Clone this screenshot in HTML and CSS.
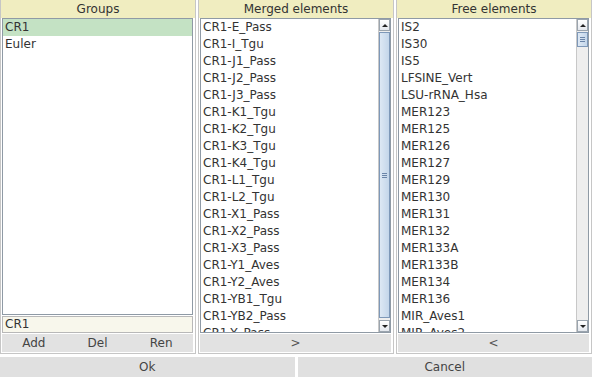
FILE: index.html
```html
<!DOCTYPE html>
<html>
<head>
<meta charset="utf-8">
<link rel="stylesheet" href="styles.css">
</head>
<body>
<div class="app">
  <div class="panels">
    <div class="panel">
      <div class="header">Groups</div>
      <div class="content">
        <div class="list">
          <div class="row selected">CR1</div>
          <div class="row">Euler</div>
        </div>
        <div class="field">CR1</div>
        <div class="buttons">
          <div class="btn">Add</div>
          <div class="btn">Del</div>
          <div class="btn">Ren</div>
        </div>
      </div>
    </div>
    <div class="panel">
      <div class="header">Merged elements</div>
      <div class="content">
        <div class="list scrolled">
          <div class="rows">
            <div class="row">CR1-E_Pass</div>
            <div class="row">CR1-I_Tgu</div>
            <div class="row">CR1-J1_Pass</div>
            <div class="row">CR1-J2_Pass</div>
            <div class="row">CR1-J3_Pass</div>
            <div class="row">CR1-K1_Tgu</div>
            <div class="row">CR1-K2_Tgu</div>
            <div class="row">CR1-K3_Tgu</div>
            <div class="row">CR1-K4_Tgu</div>
            <div class="row">CR1-L1_Tgu</div>
            <div class="row">CR1-L2_Tgu</div>
            <div class="row">CR1-X1_Pass</div>
            <div class="row">CR1-X2_Pass</div>
            <div class="row">CR1-X3_Pass</div>
            <div class="row">CR1-Y1_Aves</div>
            <div class="row">CR1-Y2_Aves</div>
            <div class="row">CR1-YB1_Tgu</div>
            <div class="row">CR1-YB2_Pass</div>
            <div class="row">CR1-Y_Pass</div>
          </div>
          <div class="sbar">
            <div class="sbtn up"><span class="tri-up"></span></div>
            <div class="track">
              <div class="thumb big"><span class="grip"></span></div>
            </div>
            <div class="sbtn down"><span class="tri-down"></span></div>
          </div>
        </div>
        <div class="buttons single">
          <div class="btn">&gt;</div>
        </div>
      </div>
    </div>
    <div class="panel">
      <div class="header">Free elements</div>
      <div class="content">
        <div class="list scrolled">
          <div class="rows">
            <div class="row">IS2</div>
            <div class="row">IS30</div>
            <div class="row">IS5</div>
            <div class="row">LFSINE_Vert</div>
            <div class="row">LSU-rRNA_Hsa</div>
            <div class="row">MER123</div>
            <div class="row">MER125</div>
            <div class="row">MER126</div>
            <div class="row">MER127</div>
            <div class="row">MER129</div>
            <div class="row">MER130</div>
            <div class="row">MER131</div>
            <div class="row">MER132</div>
            <div class="row">MER133A</div>
            <div class="row">MER133B</div>
            <div class="row">MER134</div>
            <div class="row">MER136</div>
            <div class="row">MIR_Aves1</div>
            <div class="row">MIR_Aves2</div>
          </div>
          <div class="sbar">
            <div class="sbtn up"><span class="tri-up"></span></div>
            <div class="track">
              <div class="thumb small"><span class="grip"></span></div>
            </div>
            <div class="sbtn down"><span class="tri-down"></span></div>
          </div>
        </div>
        <div class="buttons single">
          <div class="btn">&lt;</div>
        </div>
      </div>
    </div>
  </div>
  <div class="footer">
    <div class="fbtn">Ok</div>
    <div class="fbtn">Cancel</div>
  </div>
</div>
</body>
</html>
```
FILE: styles.css
```css
* { box-sizing: border-box; }
html, body { margin: 0; padding: 0; background: #ffffff; }
body {
  font-family: "DejaVu Sans", sans-serif;
  font-size: 12px;
  color: #333333;
  width: 592px;
  height: 377px;
  overflow: hidden;
}
.app {
  display: flex;
  flex-direction: column;
  height: 377px;
}
.panels {
  display: flex;
  gap: 2px;
  height: 354px;
  flex: none;
}
.panel {
  width: 196px;
  display: flex;
  flex-direction: column;
  border: 1px solid #c6c6c6;
  border-top: none;
}
.header {
  flex: none;
  height: 18px;
  line-height: 18px;
  background: #f0edc0;
  text-align: center;
  color: #333;
}
.content {
  flex: 1;
  min-height: 0;
  display: flex;
  flex-direction: column;
  padding: 0 2px 1px 1px;
  gap: 1px;
}
.list {
  flex: 1 1 0;
  border: 1px solid #8f9aa5;
  background: #fff;
  overflow: hidden;
  min-height: 0;
}
.list.scrolled {
  display: flex;
}
.rows {
  flex: 1;
  overflow: hidden;
}
.row {
  height: 17px;
  line-height: 17px;
  padding-left: 2px;
  white-space: nowrap;
}
.row.selected { background: #c4e2c4; }
.field {
  flex: none;
  height: 17px;
  line-height: 15px;
  border: 1px solid #b8b8b8;
  background: #f8f7ec;
  padding-left: 2px;
}
.buttons {
  flex: none;
  height: 18px;
  display: flex;
  background: #e2e2e2;
}
.btn {
  flex: 1;
  text-align: center;
  line-height: 18px;
  color: #444;
}
.buttons.single .btn { color: #555; }
.sbar {
  width: 12px;
  display: flex;
  flex-direction: column;
  background: #eeeeee;
  border-left: 1px solid #c8c8c8;
}
.sbtn {
  flex: none;
  height: 12px;
  background: linear-gradient(#ffffff, #e4e8ee);
  border: 1px solid #9aa4ae;
  display: flex;
  align-items: center;
  justify-content: center;
}
.tri-up {
  width: 0; height: 0;
  border-left: 3px solid transparent;
  border-right: 3px solid transparent;
  border-bottom: 3px solid #222;
}
.tri-down {
  width: 0; height: 0;
  border-left: 3px solid transparent;
  border-right: 3px solid transparent;
  border-top: 3px solid #222;
}
.track {
  flex: 1;
  display: flex;
  flex-direction: column;
  padding-top: 1px;
}
.thumb {
  background: linear-gradient(90deg, #dde8f4, #c4d6ea);
  border: 1px solid #7e98b8;
  display: flex;
  align-items: center;
  justify-content: center;
}
.thumb.big { flex: 1; margin-bottom: 2px; }
.thumb.small { height: 15px; }
.grip {
  width: 5px;
  height: 5px;
  border-top: 1px solid #6a84a8;
  border-bottom: 1px solid #6a84a8;
  position: relative;
}
.grip::after {
  content: "";
  position: absolute;
  left: 0; right: 0; top: 1px;
  border-top: 1px solid #6a84a8;
}
.footer {
  flex: none;
  height: 20px;
  margin-top: 3px;
  display: flex;
  gap: 3px;
}
.fbtn {
  flex: 1;
  background: #e0e0e0;
  text-align: center;
  line-height: 20px;
  color: #444;
}
```
